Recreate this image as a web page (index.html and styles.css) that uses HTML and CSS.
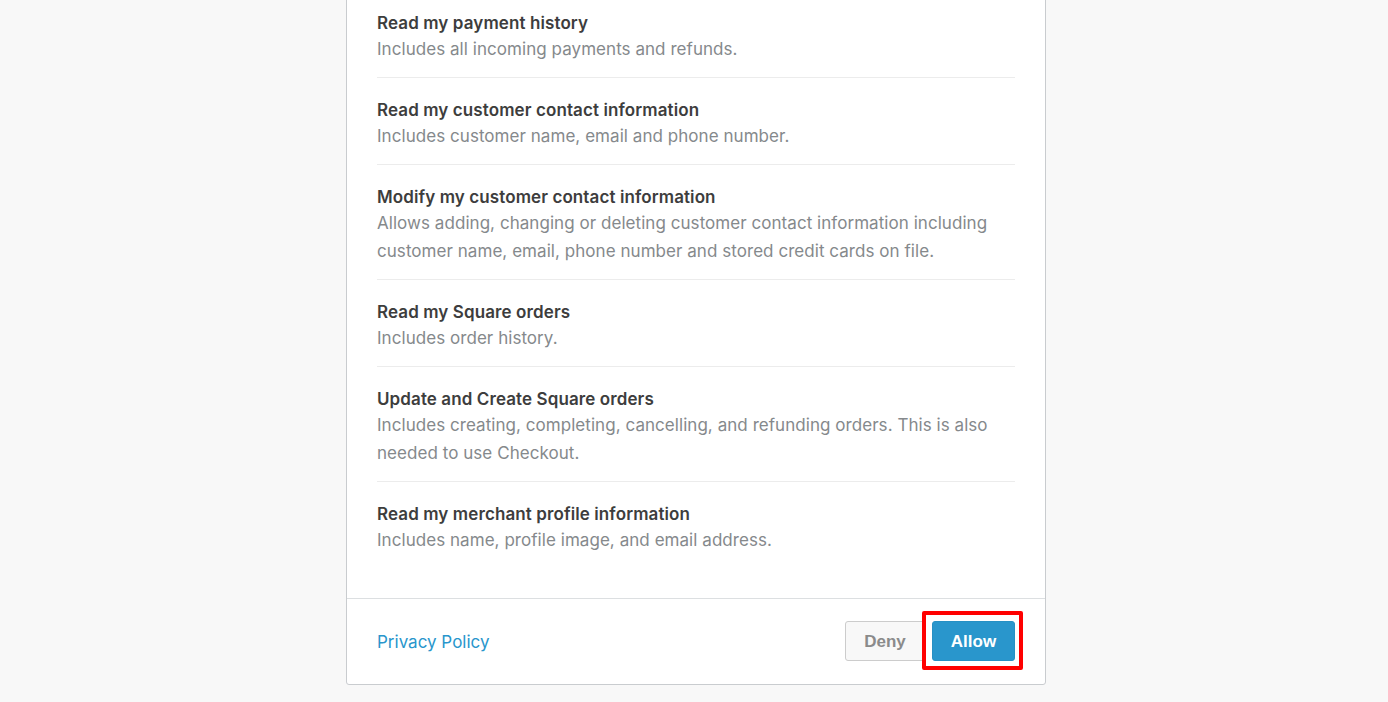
FILE: index.html
```html
<!DOCTYPE html>
<html lang="en">
<head>
<meta charset="utf-8">
<title>Authorize</title>
<link rel="stylesheet" href="styles.css">
</head>
<body>
<div class="page">
  <div class="card">
    <ul class="perms">
      <li class="perm">
        <div class="perm-title">Read my payment history</div>
        <div class="perm-desc">Includes all incoming payments and refunds.</div>
      </li>
      <li class="perm">
        <div class="perm-title">Read my customer contact information</div>
        <div class="perm-desc">Includes customer name, email and phone number.</div>
      </li>
      <li class="perm">
        <div class="perm-title">Modify my customer contact information</div>
        <div class="perm-desc">Allows adding, changing or deleting customer contact information including customer name, email, phone number and stored credit cards on file.</div>
      </li>
      <li class="perm">
        <div class="perm-title">Read my Square orders</div>
        <div class="perm-desc">Includes order history.</div>
      </li>
      <li class="perm">
        <div class="perm-title">Update and Create Square orders</div>
        <div class="perm-desc">Includes creating, completing, cancelling, and refunding orders. This is also needed to use Checkout.</div>
      </li>
      <li class="perm">
        <div class="perm-title">Read my merchant profile information</div>
        <div class="perm-desc">Includes name, profile image, and email address.</div>
      </li>
    </ul>
    <div class="card-footer">
      <a class="privacy" href="#">Privacy Policy</a>
      <div class="actions">
        <button class="btn btn-deny" type="button">Deny</button>
        <span class="highlight-wrap">
          <button class="btn btn-allow" type="button">Allow</button>
          <span class="highlight"></span>
        </span>
      </div>
    </div>
  </div>
</div>
</body>
</html>
```

FILE: styles.css
```css
html, body {
  margin: 0;
  padding: 0;
  background: #f8f8f8;
}
body {
  font-family: "Inter", "Liberation Sans", sans-serif;
  color: #3d3d3d;
  height: 702px;
  overflow: hidden;
}
.page {
  display: flex;
  justify-content: center;
  padding-left: 4px;
}
.card {
  width: 700px;
  box-sizing: border-box;
  margin-top: -10px;
  background: #fff;
  border: 1px solid #c9cccf;
  border-radius: 3px;
}
.perms {
  list-style: none;
  margin: 0;
  padding: 0 30px 30px;
}
.perm {
  padding: 20px 0 14px;
  border-bottom: 1px solid #ececec;
}
.perm:last-child {
  border-bottom: none;
}
.perm-title {
  font-size: 17px;
  line-height: 24px;
  font-weight: 600;
  letter-spacing: 0.1px;
  color: #3d3d3d;
}
.perm-desc {
  font-size: 17px;
  line-height: 28px;
  letter-spacing: 0.05px;
  color: #85898c;
}
.card-footer {
  border-top: 1px solid #dcdfe1;
  padding: 22px 30px 23px;
  display: flex;
  align-items: center;
  justify-content: space-between;
}
.privacy {
  color: #2996cc;
  text-decoration: none;
  font-size: 17px;
  padding-top: 1px;
}
.actions {
  display: flex;
  align-items: center;
  gap: 7px;
}
.btn {
  font-family: "Liberation Sans", Arial, sans-serif;
  font-weight: bold;
  font-size: 17px;
  height: 40px;
  border-radius: 3px;
  padding: 2px 0 0;
  cursor: pointer;
}
.btn-deny {
  width: 80px;
  background: #f8f8f8;
  color: #8b8b8b;
  border: 1px solid #ccc;
}
.btn-allow {
  width: 83px;
  background: #2996cc;
  color: #fff;
  border: 1px solid #2690c4;
  display: block;
}
.highlight-wrap {
  position: relative;
  display: block;
}
.highlight {
  position: absolute;
  left: -10px;
  top: -10px;
  right: -8px;
  bottom: -9px;
  border: 4px solid #ff0000;
  border-radius: 2px;
  pointer-events: none;
}
```
